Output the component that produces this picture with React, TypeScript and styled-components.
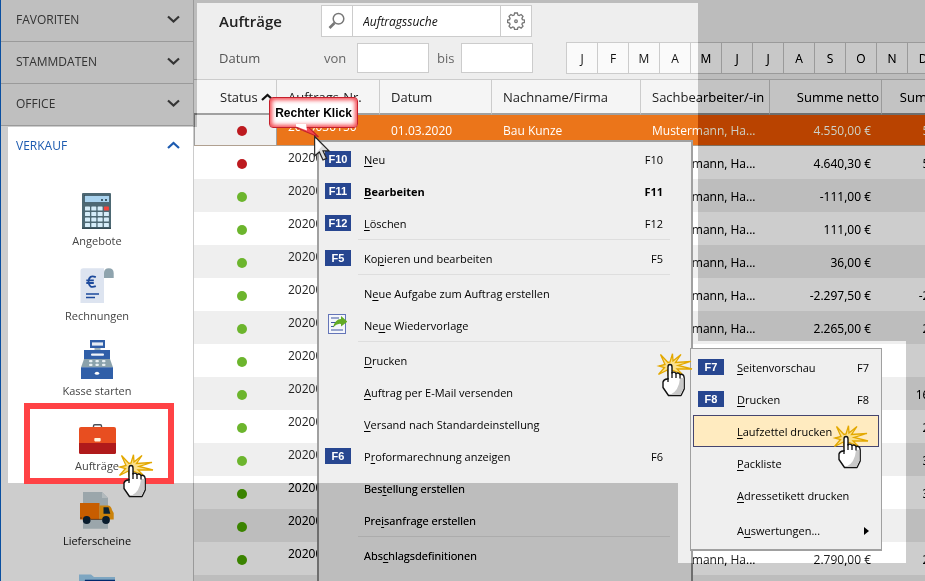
import React from 'react';
import styled, { createGlobalStyle, css } from 'styled-components';

const GlobalStyle = createGlobalStyle`
  *, *::before, *::after { box-sizing: border-box; }
  body {
    margin: 0;
    font-family: 'Open Sans', 'Noto Sans', sans-serif;
    font-size: 12px;
    color: #222;
    background: #fff;
  }
  button, input { font: inherit; color: inherit; }
`;

const line = '#ccc';

const Page = styled.div`
  position: relative;
  display: flex;
  height: 100vh;
  overflow: hidden;
  border-left: 1px solid #0a4fa0;
`;

/* ---------- Sidebar ---------- */

const Sidebar = styled.nav`
  flex: 0 0 193px;
  overflow: hidden;
  background: #fff;
  border-right: 1px solid ${line};
`;

const SectionButton = styled.button<{ $open?: boolean }>`
  display: flex;
  align-items: center;
  justify-content: space-between;
  width: 100%;
  height: 42px;
  padding: 0 13px 3px 15px;
  border: 0;
  border-bottom: 1px solid ${p => (p.$open ? 'transparent' : line)};
  background: ${p => (p.$open ? '#fff' : '#f1f1f1')};
  color: ${p => (p.$open ? '#1d5bb0' : '#666')};
  font-size: 12px;
  font-weight: 500;
`;

const ItemList = styled.ul`
  margin: 0;
  padding: 10px 0 0;
  list-style: none;
`;

const ItemLink = styled.a`
  display: flex;
  flex-direction: column;
  align-items: center;
  height: 75px;
  padding-top: 12px;
  color: #444;
  font-size: 11px;
  line-height: 18px;
  text-decoration: none;

  svg { margin-bottom: 2px; }
`;

const Chevron = ({ up }: { up?: boolean }) => (
  <svg width="13" height="8" viewBox="0 0 13 8" fill="none" stroke="currentColor" strokeWidth="2.200">
    <path d={up ? 'M1 7L6.5 2L12 7' : 'M1 1.500L6.5 6.500L12 1.500'} />
  </svg>
);

const Icon = ({ children }: { children: React.ReactNode }) => (
  <svg width="40" height="40" viewBox="0 0 40 40" aria-hidden="true">{children}</svg>
);

const CalculatorIcon = () => (
  <Icon>
    <rect x="5" y="3" width="29" height="36" rx="1" fill="#4d6873" />
    <rect x="5" y="37.500" width="29" height="1.500" fill="#344b55" />
    <rect x="7.500" y="5.500" width="25" height="7" fill="#a9d3ef" stroke="#2f4650" strokeWidth=".6" />
    <path d="M24 10h2M28 10h2" stroke="#1d3440" strokeWidth="1.600" />
    {[0, 1, 2, 3].map(r =>
      [0, 1, 2, 3].map(c => (
        <rect
          key={`${r}${c}`}
          x={8 + c * 6.3}
          y={16.5 + r * 5.5}
          width="5"
          height="4"
          rx=".6"
          fill={r === 0 && c === 3 ? '#f2443c' : '#d5ecf8'}
        />
      )),
    )}
  </Icon>
);

const InvoiceIcon = () => (
  <Icon>
    <path d="M3.500 6q0-2.700 2.700-2.700H29V38H3.500z" fill="#dde4f0" />
    <path d="M27 3h10v35H27z" fill="#fff" />
    <path d="M27 13V8q0-4.700 4.800-4.700T36.700 8v5z" fill="#8fa4ae" />
    <path d="M18.800 12.200q-6.800-2.800-7.300 4.300q.5 7.500 7.300 4.700M9.300 15.300h7.500M9.300 18h7.500" fill="none" stroke="#1d4a9c" strokeWidth="1.800" />
    <path d="M9 29h13M9 32.600h9" stroke="#1d4a9c" strokeWidth="1.500" />
  </Icon>
);

const RegisterIcon = () => (
  <Icon>
    <rect x="17.500" y="7" width="6" height="4" fill="#9bb0ba" />
    <rect x="13" y="0" width="15" height="8" fill="#305fa8" />
    <rect x="15" y="2.400" width="11" height="3.200" fill="#e6edf5" />
    <rect x="7" y="10" width="26" height="9" fill="#305fa8" />
    <rect x="14" y="13.400" width="13" height="2.300" rx="1" fill="#f1f5fa" />
    <path d="M7 19H33L36 27.500H4z" fill="#8ba2ac" />
    {[20, 23.8].map(y => [12, 18.4, 25].map(x => <rect key={`${x}${y}`} x={x} y={y} width="3.500" height="2.300" rx="1" fill="#e8eff3" />))}
    <rect x="4" y="27.300" width="32" height="11.700" fill="#305fa8" />
    <ellipse cx="20" cy="33.300" rx="2.200" ry="1.500" fill="#fff" />
  </Icon>
);

const BriefcaseIcon = () => (
  <Icon>
    <path d="M16.500 13V11q0-1.200 1.200-1.200h5.600q1.200 0 1.200 1.200v2" fill="none" stroke="#4a4f57" strokeWidth="1.400" />
    <path d="M2 14q0-2 2-2H37q2 0 2 2V28.500H2z" fill="#e84e20" />
    <path d="M2 28H39v9.500q0 1.500-1.500 1.500h-34Q2 39 2 37.500z" fill="#b01a1b" />
    <rect x="17.300" y="23" width="6.400" height="3.400" rx=".8" fill="#fff3dc" />
  </Icon>
);

const TruckIcon = () => (
  <Icon>
    <path d="M6 2H25L31 8V38.700H6z" fill="#cdd8dd" />
    <path d="M25 2L31 8H25z" fill="#e4ecef" />
    <rect x="3" y="13" width="19.500" height="16.500" fill="#f98f32" />
    <path d="M22.500 15.500H31Q34 15.500 35 20L36.700 23V29.500H22.500z" fill="#fdb43c" />
    <path d="M26.500 17.300H31.500L33.300 23.700H26.500z" fill="#3f5563" />
    <circle cx="9.700" cy="30" r="3.900" fill="#3c4f60" />
    <circle cx="29" cy="30" r="3.900" fill="#3c4f60" />
    <path d="M3 28h2M13.600 29.400h11.500" stroke="#7b6350" strokeWidth=".8" />
  </Icon>
);

const FolderIcon = () => (
  <Icon>
    <path d="M2 9.400H14L17 12H38V40H2z" fill="#b0d8f3" />
    <path d="M8 14.700H38V40H4z" fill="#335a9f" />
  </Icon>
);

const sections = ['FAVORITEN', 'STAMMDATEN', 'OFFICE'];
const navItems = [
  { label: 'Angebote', Glyph: CalculatorIcon },
  { label: 'Rechnungen', Glyph: InvoiceIcon },
  { label: 'Kasse starten', Glyph: RegisterIcon },
  { label: 'Aufträge', Glyph: BriefcaseIcon },
  { label: 'Lieferscheine', Glyph: TruckIcon },
  { label: '', Glyph: FolderIcon },
];

/* ---------- Header with search and filter ---------- */

const Main = styled.main`
  flex: 1;
  min-width: 0;
  overflow: hidden;
  background: #eee;
`;

const Header = styled.header`
  display: flex;
  flex-direction: column;
  gap: 5px;
  padding: 5px 0 5px 25px;
`;

const HeaderRow = styled.div`
  display: flex;
  align-items: center;
  height: 32px;
`;

const Title = styled.h1`
  width: 102px;
  margin: 0;
  font-size: 15px;
  font-weight: 600;
`;

const SearchBox = styled.div`
  display: flex;
  width: 211px;
  height: 32px;
  border: 1px solid ${line};
  background: #fff;
`;

const IconButton = styled.button`
  display: grid;
  place-items: center;
  flex: 0 0 30px;
  padding: 0;
  border: 0;
  background: none;
  color: #777;
`;

const SearchInput = styled.input`
  flex: 1;
  min-width: 0;
  padding: 0 10px;
  border: solid ${line};
  border-width: 0 1px;
  background: none;
  color: #111;
  font-style: italic;
  outline: 0;
`;

const FilterLabel = styled.label<{ $w: number }>`
  flex: 0 0 ${p => p.$w}px;
  color: #666;
  font-size: 13px;
`;

const FilterTitle = styled.span`
  flex: 0 0 105px;
  color: #555;
  font-size: 13px;
  font-weight: 500;
`;

const DateInput = styled.input`
  flex: 0 0 72px;
  width: 72px;
  height: 30px;
  margin-right: 8px;
  padding: 0 6px;
  border: 1px solid ${line};
  background: #fff;
`;

const Months = styled.div`
  display: flex;
  height: 32px;
  margin-left: 25px;
  border: solid ${line};
  border-width: 1px 0;
`;

const MonthButton = styled.button`
  width: 31px;
  padding: 0;
  border: 0;
  border-left: 1px solid ${line};
  background: #fafafa;
  color: #111;
  font-size: 12px;
  font-weight: 500;
`;

/* ---------- Table ---------- */

const Table = styled.table`
  width: 797px;
  table-layout: fixed;
  border-collapse: separate;
  border-spacing: 0;
`;

const Th = styled.th<{ $num?: boolean; $first?: boolean }>`
  height: 36px;
  padding: 0 ${p => (p.$num ? 2 : 0)}px 0 ${p => (p.$first ? 26 : 11)}px;
  border-top: 1px solid ${line};
  border-bottom: 2px solid #a0a0a0;
  border-right: 1px solid ${line};
  background: #f5f5f5;
  font-size: 13px;
  font-weight: 500;
  text-align: ${p => (p.$num ? 'right' : 'left')};
  white-space: nowrap;

  svg { margin-left: 3px; color: #111; vertical-align: 1px; }
`;

const Td = styled.td<{ $num?: boolean }>`
  padding: 2px 11px 0;
  overflow: hidden;
  font-size: 12px;
  line-height: 18px;
  text-align: ${p => (p.$num ? 'right' : 'left')};
  white-space: nowrap;
`;

const NumberTd = styled(Td)`
  padding-top: 3px;
  vertical-align: top;
`;

const StatusTd = styled(Td)`
  padding: 2px 0 0 43px;
`;

const Dot = styled.span<{ $red?: boolean }>`
  display: block;
  width: 10px;
  height: 10px;
  border-radius: 50%;
  background: ${p => (p.$red ? '#bd1a1f' : '#6cb52d')};
`;

const Tr = styled.tr<{ $selected?: boolean; $even?: boolean }>`
  height: 33px;
  background: ${p => (p.$even ? '#fff' : '#efefef')};
  ${p =>
    p.$selected &&
    css`
      height: 31px;
      background: #eb751a;
      color: #fff;
      ${StatusTd} { border: 1px solid #a0a0a0; border-top: 0; background: #f0f0f0; padding-left: 42px; }
      ${Td} { border-bottom: 1px solid #b0a090; }
    `}
`;

const columns: [string, number, boolean?][] = [
  ['Status', 83],
  ['Auftrags-Nr.', 103],
  ['Datum', 112],
  ['Nachname/Firma', 149],
  ['Sachbearbeiter/-in', 129],
  ['Summe netto', 112, true],
  ['Summe brutto', 109, true],
];

const orders = [
  { nr: '2020030150', date: '01.03.2020', name: 'Bau Kunze', net: '4.550,00 €', gross: '5.414,50 €' },
  { nr: '2020030149', net: '4.640,30 €', gross: '5.521,96 €' },
  { nr: '2020030148', net: '-111,00 €', gross: '-132,09 €' },
  { nr: '2020030147', net: '111,00 €', gross: '132,09 €' },
  { nr: '2020030146', net: '36,00 €', gross: '42,84 €' },
  { nr: '2020030145', net: '-2.297,50 €', gross: '-2.734,03 €' },
  { nr: '2020030144', net: '2.265,00 €', gross: '2.695,35 €' },
  { nr: '2020030143' },
  { nr: '2020030142', gross: '16.065,00 €' },
  { nr: '2020030141', gross: '2.380,00 €' },
  { nr: '2020030140', gross: '3.213,00 €' },
  { nr: '2020030139', gross: '3.451,00 €' },
  { nr: '2020030138' },
  { nr: '2020030137', net: '2.790,00 €', gross: '2.380,00 €' },
  { nr: '2020030136' },
];

/* ---------- Context menus ---------- */

const Menu = styled.div`
  position: absolute;
  top: 140px;
  left: 316px;
  width: 376px;
  padding: 1px 0 20px;
  border: 2px solid #a0a0a0;
  background: #efefef;
`;

const SubMenu = styled(Menu)`
  top: 348px;
  left: 689px;
  width: 192px;
  padding: 2px 2px 3px;
  border-width: 1px;
  border-bottom-width: 2px;
`;

const MenuButton = styled.button<{ $strong?: boolean; $active?: boolean; $sub?: boolean }>`
  display: grid;
  grid-template-columns: 39px 1fr auto;
  align-items: center;
  width: 100%;
  height: 32px;
  padding: 0 ${p => (p.$sub ? 10 : 28)}px 0 ${p => (p.$sub ? 5 : 6)}px;
  border: 0;
  outline: ${p => (p.$active ? '1px solid #45456f' : '0')};
  outline-offset: -1px;
  background: ${p => (p.$active ? '#ffebc0' : 'none')};
  color: #000;
  font-size: 11px;
  font-weight: ${p => (p.$strong ? 700 : 500)};
  text-align: left;
  white-space: nowrap;

  u { text-underline-offset: 2px; }
`;

const KeyBadge = styled.span`
  width: 26px;
  height: 16px;
  background: #274690;
  color: #fff;
  font: bold 11px/16px 'Liberation Sans', Arial, sans-serif;
  text-align: center;
`;

const Separator = styled.hr<{ $plain?: boolean }>`
  height: 3px;
  margin: 0 21px 0 39px;
  border: 0;
  border-top: 1px solid ${p => (p.$plain ? 'transparent' : '#dedede')};
`;

const FollowUpIcon = () => (
  <svg width="22" height="22" viewBox="0 0 22 22" aria-hidden="true">
    <rect x="3.500" y="1.500" width="17" height="19" fill="#f4f6fb" stroke="#6475b8" />
    <path d="M6 5h8M6 9.500h5M6 13.500h3M6 17h12" stroke="#3c55a0" strokeWidth="1.200" />
    <path d="M8 14.500Q10 6 16 6V3L22.500 8.700L16 13.500V11Q12 10 8 14.500z" fill="#62ab25" />
  </svg>
);

const Triangle = () => (
  <svg width="5" height="8" viewBox="0 0 5 8"><path d="M0 0L5 4L0 8z" /></svg>
);

type Entry = {
  text?: string;
  mark?: number;
  hotkey?: string;
  strong?: boolean;
  active?: boolean;
  followUp?: boolean;
  nested?: boolean;
  gap?: 'line' | 'plain';
};

const menuEntries: Entry[] = [
  { text: 'Neu', mark: 0, hotkey: 'F10' },
  { text: 'Bearbeiten', mark: 0, hotkey: 'F11', strong: true },
  { text: 'Löschen', mark: 0, hotkey: 'F12' },
  { gap: 'line' },
  { text: 'Kopieren und bearbeiten', mark: 2, hotkey: 'F5' },
  { gap: 'line' },
  { text: 'Neue Aufgabe zum Auftrag erstellen', mark: 1 },
  { text: 'Neue Wiedervorlage', mark: 2, followUp: true },
  { gap: 'line' },
  { text: 'Drucken', mark: 0 },
  { text: 'Auftrag per E-Mail versenden', mark: 0 },
  { text: 'Versand nach Standardeinstellung', mark: 0 },
  { text: 'Proformarechnung anzeigen', mark: 1, hotkey: 'F6' },
  { text: 'Bestellung erstellen', mark: 3 },
  { text: 'Preisanfrage erstellen', mark: 3 },
  { gap: 'line' },
  { text: 'Abschlagsdefinitionen', mark: 3 },
];

const subEntries: Entry[] = [
  { text: 'Seitenvorschau', mark: 0, hotkey: 'F7' },
  { text: 'Drucken', mark: 0, hotkey: 'F8' },
  { text: 'Laufzettel drucken', mark: 0, active: true },
  { text: 'Packliste', mark: 0 },
  { text: 'Adressetikett drucken', mark: 0 },
  { gap: 'plain' },
  { text: 'Auswertungen...', mark: 1, nested: true },
];

const Entries = ({ items, sub }: { items: Entry[]; sub?: boolean }) => (
  <>
    {items.map(({ text = '', mark = 0, hotkey, strong, active, followUp, nested, gap }, i) =>
      gap ? (
        <Separator key={i} $plain={gap === 'plain'} />
      ) : (
        <MenuButton key={i} role="menuitem" $strong={strong} $active={active} $sub={sub}>
          {hotkey ? <KeyBadge>{hotkey}</KeyBadge> : <span>{followUp && <FollowUpIcon />}</span>}
          <span>{text.slice(0, mark)}<u>{text[mark]}</u>{text.slice(mark + 1)}</span>
          <span>{nested ? <Triangle /> : hotkey}</span>
        </MenuButton>
      ),
    )}
  </>
);

/* ---------- Tutorial overlay ---------- */

const Shade = styled.div`
  position: absolute;
  inset: 0;
  pointer-events: none;
  backdrop-filter: brightness(71.8%) contrast(139.2%);
  clip-path: polygon(
    evenodd,
    0 0, 100% 0, 100% 100%, 0 100%, 0 0,
    7px 127px, 196px 127px, 196px 3px, 697px 3px, 697px 341px, 905px 341px,
    905px 563px, 677px 563px, 677px 483px, 7px 483px, 7px 127px, 0 0
  );
`;

const Frame = styled.div`
  position: absolute;
  top: 403px;
  left: 23px;
  width: 150px;
  height: 81px;
  border: 6px solid #ff4245;
  pointer-events: none;
`;

const Callout = styled.div`
  position: absolute;
  top: 97px;
  left: 268px;
  width: 89px;
  height: 31px;
  border: 1px solid #c4202c;
  border-radius: 4px;
  background: #fff;
  box-shadow: inset 0 0 4px 2px #f4474f;
  color: #000;
  font: bold 12px/30px 'Liberation Sans', Arial, sans-serif;
  text-align: center;
  white-space: nowrap;
`;

const Pointer = styled.svg<{ $x: number; $y: number }>`
  position: absolute;
  left: ${p => p.$x}px;
  top: ${p => p.$y}px;
  pointer-events: none;
`;

const ClickHand = ({ x, y }: { x: number; y: number }) => (
  <Pointer $x={x} $y={y} width="40" height="46" viewBox="0 0 40 46">
    <path
      d="M14 9L16.500 0.800L17 8L25 1.500L19.500 9.500L35 8.500L22 12.500L36 16L21 16L26 21L17 17.500L12 22L11.500 17L2.500 21.500L8.500 14.500L3 13L9 11.500L4.500 1.500L12 9.500z"
      fill="#fbe08a"
      stroke="#e3a800"
      strokeWidth="1.300"
    />
    <path
      d="M12 26V14Q12 11.500 14 11.500T16 14V20Q18 18 20 20.500Q22.500 19 24 21.500Q28 20.500 28.200 25V36L25 42.500H12.500L7 34.500V29Q8 25.500 12 26z"
      fill="#fff"
      stroke="#111"
      strokeWidth="1.400"
      strokeLinejoin="round"
    />
    <path d="M24 25h3.500V35.500L24.500 42H14Q23 38 24 25z" fill="#c9c9c9" />
    <path d="M12 25V29M16 19V25M20 20.500V25M24 21.500V25.500" stroke="#111" strokeWidth="1.300" />
  </Pointer>
);

export default function App() {
  return (
    <Page>
      <GlobalStyle />
      <Sidebar>
        {sections.map(s => (
          <SectionButton key={s}>{s}<Chevron /></SectionButton>
        ))}
        <SectionButton $open>VERKAUF<Chevron up /></SectionButton>
        <ItemList>
          {navItems.map(({ label, Glyph }, i) => (
            <li key={i}><ItemLink href="#"><Glyph />{label}</ItemLink></li>
          ))}
        </ItemList>
      </Sidebar>

      <Main>
        <Header>
          <HeaderRow>
            <Title>Aufträge</Title>
            <SearchBox>
              <IconButton aria-label="Suchen">
                <svg width="18" height="18" viewBox="0 0 18 18" fill="none" stroke="currentColor">
                  <circle cx="10.500" cy="6.800" r="5.300" strokeWidth="1.500" />
                  <path d="M6.500 11L1.500 16" strokeWidth="2.600" />
                </svg>
              </IconButton>
              <SearchInput aria-label="Auftragssuche" defaultValue="Auftragssuche" />
              <IconButton aria-label="Einstellungen">
                <svg width="18" height="18" viewBox="0 0 18 18" fill="none" stroke="currentColor" strokeWidth="1.300">
                  <path d="M7.600 1h2.800l.5 2.100 1.300.5 1.900-1.100 1.900 1.900-1.100 1.900.5 1.300 2.100.5v2.400l-2.100.5-.5 1.300 1.100 1.900-1.900 1.900-1.900-1.100-1.300.5-.5 2H7.600l-.5-2-1.300-.5-1.900 1.100L2 14.200l1.100-1.900-.5-1.300-2-.5V8.100l2-.5.5-1.300L2 4.400l1.900-1.900 1.900 1.100 1.300-.5z" />
                  <circle cx="9" cy="9.200" r="1.300" />
                </svg>
              </IconButton>
            </SearchBox>
          </HeaderRow>
          <HeaderRow>
            <FilterTitle>Datum</FilterTitle>
            <FilterLabel $w={33} htmlFor="from">von</FilterLabel>
            <DateInput id="from" />
            <FilterLabel $w={24} htmlFor="to">bis</FilterLabel>
            <DateInput id="to" />
            <Months>
              {[...'JFMAMJJASOND'].map((m, i) => <MonthButton key={i}>{m}</MonthButton>)}
            </Months>
          </HeaderRow>
        </Header>

        <Table>
          <colgroup>
            {columns.map(([name, width]) => <col key={name} width={width} />)}
          </colgroup>
          <thead>
            <tr>
              {columns.map(([name, , num], i) => (
                <Th key={name} $num={num} $first={i === 0}>{name}{i === 0 && <Chevron up />}</Th>
              ))}
            </tr>
          </thead>
          <tbody>
            {orders.map((o, i) => (
              <Tr key={o.nr} $selected={i === 0} $even={i % 2 === 1}>
                <StatusTd><Dot $red={i < 2} /></StatusTd>
                <NumberTd>{o.nr}</NumberTd>
                <Td>{o.date}</Td>
                <Td>{o.name}</Td>
                <Td>Mustermann, Ha...</Td>
                <Td $num>{o.net}</Td>
                <Td $num>{o.gross}</Td>
              </Tr>
            ))}
          </tbody>
        </Table>
      </Main>

      <Menu role="menu"><Entries items={menuEntries} /></Menu>
      <SubMenu role="menu"><Entries items={subEntries} sub /></SubMenu>

      <Shade />
      <Frame />
      <Callout>Rechter Klick</Callout>
      <Pointer $x={293} $y={124} width="40" height="40" viewBox="0 0 40 40">
        <path d="M2 3.500L24.500 13L15 3.500z" fill="#f4474f" stroke="#c4202c" strokeWidth="1.200" />
        <path d="M2 0V2.500L13 6.500L12 0z" fill="#fff" />
        <path d="M20.700 12.500V32L25.300 28L29 36L32.500 34.400L29 26.800H35z" fill="#ddd" stroke="#222" strokeWidth="1.200" />
        <path d="M21.500 14.500V30L28 22z" fill="#fff" />
      </Pointer>
      <ClickHand x={116} y={454} />
      <ClickHand x={655} y={353} />
      <ClickHand x={831} y={425} />
    </Page>
  );
}
